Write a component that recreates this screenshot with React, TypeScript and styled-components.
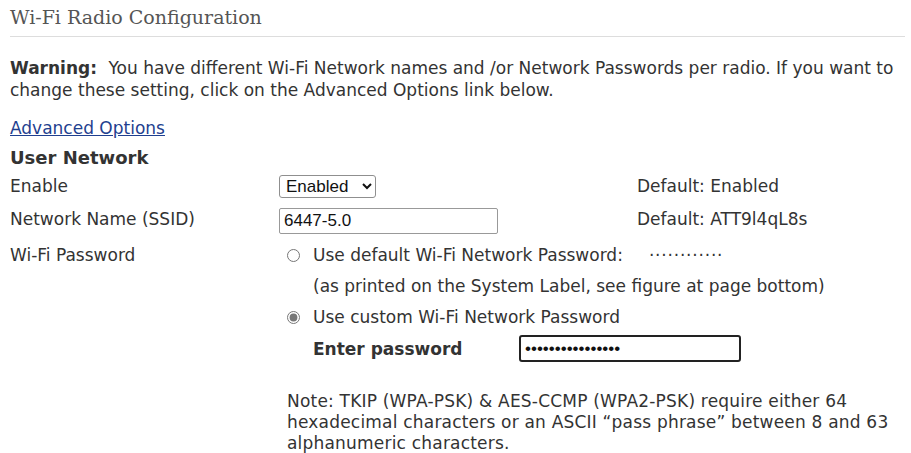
import styled, { createGlobalStyle } from "styled-components";

const GlobalStyle = createGlobalStyle`
  body {
    margin: 0;
    background: #ffffff;
    font-family: "DejaVu Sans", Verdana, sans-serif;
    color: #333333;
  }
`;

const Page = styled.div`
  padding: 4px 6px 0 10px;
`;

const Title = styled.h2`
  margin: 0;
  padding-bottom: 6px;
  border-bottom: 1px solid #dddddd;
  font-family: "DejaVu Serif", Georgia, serif;
  font-weight: normal;
  font-size: 19px;
  line-height: 26px;
  color: #555555;
`;

const Warning = styled.p`
  margin: 20px 0 0;
  font-size: 17px;
  line-height: 22px;
`;

const Bold = styled.b`
  font-weight: bold;
  margin-right: 6px;
`;

const Link = styled.a`
  display: inline-block;
  margin-top: 17px;
  font-size: 17px;
  line-height: 20px;
  color: #1f3f8f;
  text-decoration: underline;
`;

const SectionTitle = styled.h3`
  margin: 8px 0 0;
  font-size: 18px;
  line-height: 24px;
  font-weight: bold;
`;

const Form = styled.div`
  display: grid;
  grid-template-columns: 269px 358px 1fr;
  row-gap: 10px;
  margin-top: 5px;
  font-size: 17px;
`;

const Label = styled.div`
  align-self: start;
  line-height: 22px;
`;

const Cell = styled.div<{ $span?: number }>`
  display: flex;
  align-items: center;
  grid-column: span ${(p) => p.$span ?? 1};
`;

const DefaultNote = styled.div`
  align-self: start;
  line-height: 22px;
`;

const Select = styled.select`
  width: 97px;
  height: 23px;
  font-family: "Liberation Sans", Arial, sans-serif;
  font-size: 17px;
  color: #111;
  border: 1px solid #8f8f8f;
  border-radius: 3px;
  background: #fff;
  padding: 0 2px;
`;

const TextInput = styled.input<{ $width: number; $focused?: boolean }>`
  box-sizing: border-box;
  width: ${(p) => p.$width}px;
  height: ${(p) => (p.$focused ? 27 : 26)}px;
  padding: 1px 4px;
  font-family: "Liberation Sans", Arial, sans-serif;
  font-size: 17px;
  color: #111;
  border: ${(p) => (p.$focused ? "2px solid #222" : "1px solid #999")};
  border-radius: ${(p) => (p.$focused ? "3px" : "2px")};
  outline: none;
`;

const RadioGroup = styled.div`
  display: flex;
  flex-direction: column;
  gap: 9px;
  padding-left: 8px;
`;

const RadioRow = styled.label`
  display: flex;
  align-items: center;
  gap: 13px;
  line-height: 22px;
`;

const Radio = styled.input`
  width: 13px;
  height: 13px;
  margin: 0;
  accent-color: #777;
`;

const Indent = styled.div<{ $pull?: number }>`
  display: flex;
  align-items: center;
  padding-left: 26px;
  margin-top: ${(p) => -(p.$pull ?? 0)}px;
  line-height: 22px;
`;

const Dots = styled.span`
  margin-left: 13px;
  letter-spacing: 0.8px;
`;

const PasswordLabel = styled.span`
  width: 206px;
  font-weight: bold;
`;

const Note = styled.p`
  grid-column: 2 / span 2;
  width: 612px;
  margin: 19px 0 0;
  padding-left: 8px;
  font-size: 17px;
  line-height: 21px;
  letter-spacing: 0.2px;
`;

export default function App() {
  return (
    <>
      <GlobalStyle />
      <Page>
        <Title>Wi-Fi Radio Configuration</Title>
        <Warning>
          <Bold>Warning:</Bold> You have different Wi-Fi Network names and /or Network
          Passwords per radio. If you want to change these setting, click on the Advanced
          Options link below.
        </Warning>
        <Link href="#">Advanced Options</Link>
        <SectionTitle>User Network</SectionTitle>
        <Form>
          <Label>Enable</Label>
          <Cell>
            <Select defaultValue="Enabled">
              <option>Enabled</option>
              <option>Disabled</option>
            </Select>
          </Cell>
          <DefaultNote>Default: Enabled</DefaultNote>

          <Label>Network Name (SSID)</Label>
          <Cell>
            <TextInput $width={219} defaultValue="6447-5.0" />
          </Cell>
          <DefaultNote>Default: ATT9l4qL8s</DefaultNote>

          <Label>Wi-Fi Password</Label>
          <Cell $span={2}>
            <RadioGroup>
              <RadioRow>
                <Radio type="radio" name="pw" />
                Use default Wi-Fi Network Password:
                <Dots>············</Dots>
              </RadioRow>
              <Indent>(as printed on the System Label, see figure at page bottom)</Indent>
              <RadioRow>
                <Radio type="radio" name="pw" defaultChecked />
                Use custom Wi-Fi Network Password
              </RadioRow>
              <Indent $pull={2}>
                <PasswordLabel>Enter password</PasswordLabel>
                <TextInput $width={222} $focused type="password" defaultValue="passwordpassword" />
              </Indent>
            </RadioGroup>
          </Cell>
          <Note>
            Note: TKIP (WPA-PSK) &amp; AES-CCMP (WPA2-PSK) require either 64 hexadecimal
            characters or an ASCII “pass phrase” between 8 and 63 alphanumeric characters.
          </Note>
        </Form>
      </Page>
    </>
  );
}
